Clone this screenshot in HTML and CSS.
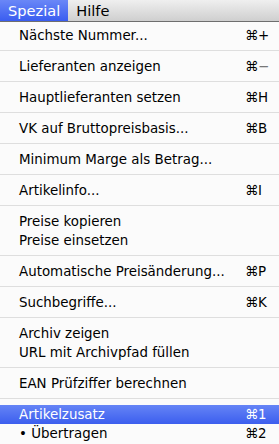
FILE: index.html
```html
<!DOCTYPE html>
<html lang="de">
<head>
    <meta charset="UTF-8">
    <meta name="viewport" content="width=device-width, initial-scale=1.0">
    <title>Spezial</title>
    <link rel="stylesheet" href="styles.css">
</head>
<body>
    <div id="menubar">
        <div class="title active">Spezial</div>
        <div class="title">Hilfe</div>
    </div>
    <div id="menu">
        <div class="item"><span>Nächste Nummer...</span><span class="key"><i>⌘</i>+</span></div>
        <div class="sep"></div>
        <div class="item"><span>Lieferanten anzeigen</span><span class="key"><i>⌘</i><b>−</b></span></div>
        <div class="sep"></div>
        <div class="item"><span>Hauptlieferanten setzen</span><span class="key"><i>⌘</i>H</span></div>
        <div class="sep"></div>
        <div class="item"><span>VK auf Bruttopreisbasis...</span><span class="key"><i>⌘</i>B</span></div>
        <div class="sep"></div>
        <div class="item"><span>Minimum Marge als Betrag...</span></div>
        <div class="sep"></div>
        <div class="item"><span>Artikelinfo...</span><span class="key"><i>⌘</i>I</span></div>
        <div class="sep"></div>
        <div class="item"><span>Preise kopieren</span></div>
        <div class="item"><span>Preise einsetzen</span></div>
        <div class="sep"></div>
        <div class="item"><span>Automatische Preisänderung...</span><span class="key"><i>⌘</i>P</span></div>
        <div class="sep"></div>
        <div class="item"><span>Suchbegriffe...</span><span class="key"><i>⌘</i>K</span></div>
        <div class="sep"></div>
        <div class="item"><span>Archiv zeigen</span></div>
        <div class="item"><span>URL mit Archivpfad füllen</span></div>
        <div class="sep"></div>
        <div class="item"><span>EAN Prüfziffer berechnen</span></div>
        <div class="sep"></div>
        <div class="item selected"><span>Artikelzusatz</span><span class="key"><i>⌘</i>1</span></div>
        <div class="item"><span>• Übertragen</span><span class="key"><i>⌘</i>2</span></div>
    </div>
</body>
</html>
```

FILE: styles.css
```css
body{
    margin: 0;
    background-color: #fbfbfb;
    font-family: "DejaVu Sans", Verdana, sans-serif;
    font-size: 13.4px;
    color: #000;
    overflow: hidden;
}
#menubar{
    height: 21px;
    display: flex;
    background: linear-gradient(#efefef, #cfcfcf);
    border-bottom: 1px solid #6e6e6e;
}
.title{
    padding: 0 8px;
    line-height: 21px;
    font-size: 14.6px;
}
.title.active{
    color: white;
    background: linear-gradient(#6a87f7, #3a5df0);
}
#menu{
    padding-top: 4px;
}
.item{
    height: 19px;
    line-height: 19px;
    display: flex;
    justify-content: space-between;
    padding-left: 19px;
}
.key{
    width: 25px;
    padding-right: 9px;
}
.key i{
    font-style: normal;
    display: inline-block;
    width: 13px;
}
.key b{
    font-weight: normal;
    color: #777;
}
.selected{
    color: white;
    background: linear-gradient(#6584f6, #3c5eee);
}
.sep{
    height: 1px;
    background-color: #dedede;
    margin: 5px 0 6px;
}
```
